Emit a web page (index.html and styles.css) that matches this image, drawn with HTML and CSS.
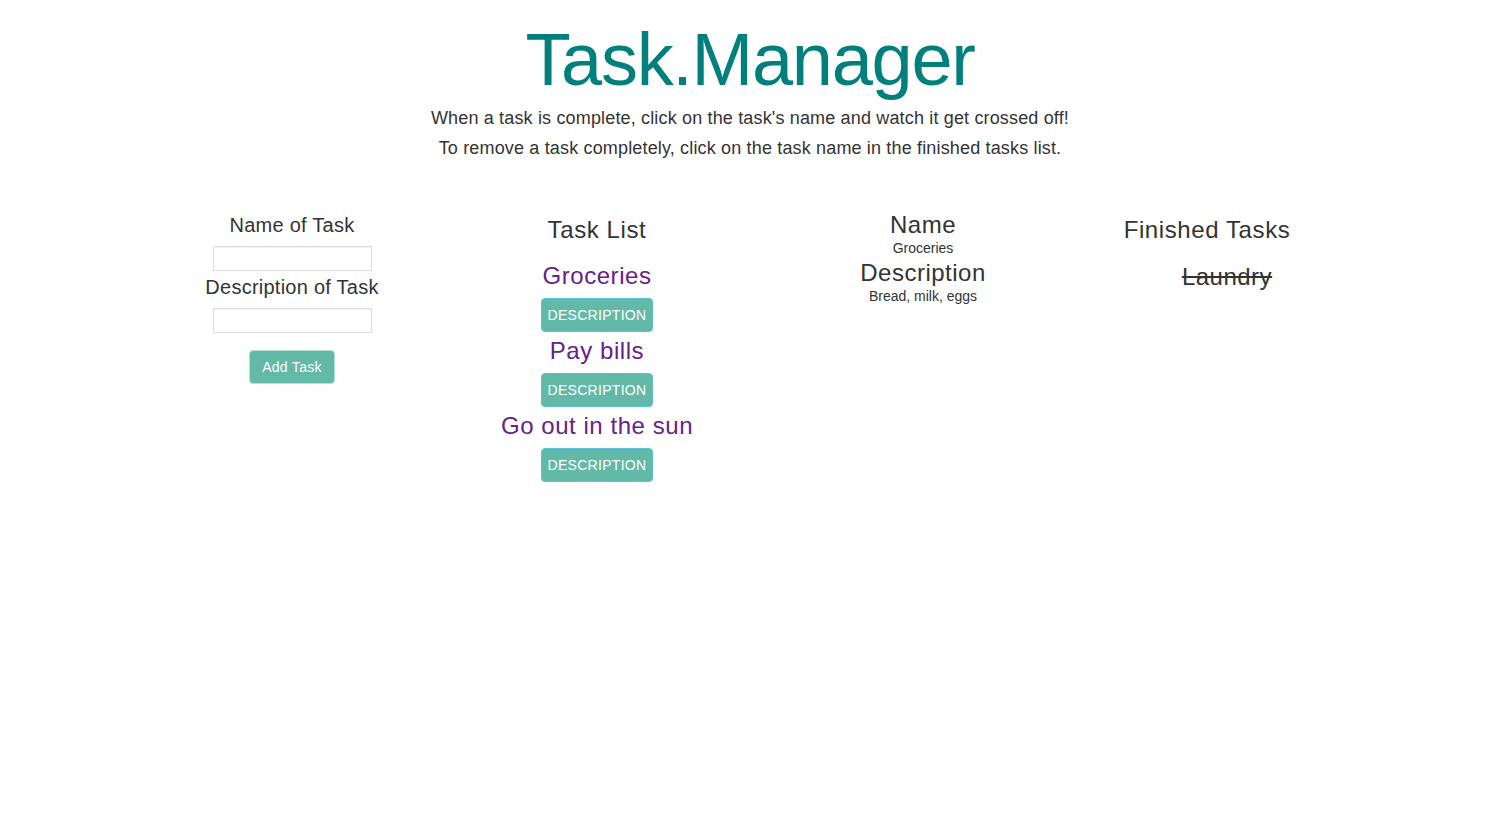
FILE: index.html
```html
<!DOCTYPE html>
<html lang="en">
<head>
<meta charset="utf-8">
<title>Task.Manager</title>
<link rel="stylesheet" href="styles.css">
</head>
<body>
<header class="header">
  <h1 class="title">Task.Manager</h1>
  <p class="intro">When a task is complete, click on the task's name and watch it get crossed off!</p>
  <p class="intro">To remove a task completely, click on the task name in the finished tasks list.</p>
</header>
<main class="board">
  <section class="col col-form">
    <label class="field-label" for="name">Name of Task</label>
    <input class="field" id="name" type="text">
    <label class="field-label second" for="desc">Description of Task</label>
    <input class="field" id="desc" type="text">
    <button class="btn btn-add" type="button">Add Task</button>
  </section>
  <section class="col col-list">
    <h3 class="col-title">Task List</h3>
    <div class="tasks">
      <div class="task">
        <div class="task-name">Groceries</div>
        <button class="btn btn-desc" type="button">DESCRIPTION</button>
      </div>
      <div class="task">
        <div class="task-name">Pay bills</div>
        <button class="btn btn-desc" type="button">DESCRIPTION</button>
      </div>
      <div class="task">
        <div class="task-name">Go out in the sun</div>
        <button class="btn btn-desc" type="button">DESCRIPTION</button>
      </div>
    </div>
  </section>
  <section class="col col-detail">
    <h3 class="detail-title">Name</h3>
    <div class="detail-text">Groceries</div>
    <h3 class="detail-title second">Description</h3>
    <div class="detail-text">Bread, milk, eggs</div>
  </section>
  <section class="col col-done">
    <h3 class="col-title">Finished Tasks</h3>
    <ul class="done-list">
      <li class="done-item">Laundry</li>
    </ul>
  </section>
</main>
</body>
</html>
```
FILE: styles.css
```css
* { box-sizing: border-box; }

body {
  margin: 0;
  font-family: "Liberation Sans", Arial, Helvetica, sans-serif;
  color: #333;
  background: #fff;
}

.header {
  text-align: center;
}

.title {
  margin: 23px 0 6px;
  font-size: 74px;
  line-height: 74px;
  font-weight: normal;
  letter-spacing: -1.3px;
  color: #00807d;
}

.intro {
  margin: 0;
  font-size: 18px;
  line-height: 30px;
  letter-spacing: 0.16px;
}

.board {
  display: grid;
  grid-template-columns: 300px 310px 342px 226px;
  margin: 49px 0 0 142px;
  align-items: start;
}

.col {
  display: flex;
  flex-direction: column;
  align-items: center;
  text-align: center;
}

.field-label {
  font-size: 20px;
  line-height: 22px;
  margin-top: 2px;
  letter-spacing: 0.25px;
}

.field-label.second {
  margin-top: 5px;
}

.field {
  width: 159px;
  height: 25px;
  margin-top: 10px;
  border: 1px solid #ddd;
  box-shadow: inset 0 1px 1px rgba(0,0,0,0.05);
  background: #fff;
}

.btn {
  font-family: "Liberation Sans", Arial, Helvetica, sans-serif;
  font-size: 14px;
  line-height: 20px;
  letter-spacing: 0.3px;
  color: #fff;
  background: #63b9a8;
  border: 1px solid #b9ddd6;
  border-radius: 4px;
  padding: 6px 12px;
}

.btn-add {
  margin-top: 17px;
  width: 86px;
  padding: 6px 0;
}

.col-title {
  margin: 5px 0 0;
  font-size: 24px;
  line-height: 26px;
  font-weight: normal;
  letter-spacing: 0.6px;
}

.tasks {
  margin-top: 20px;
  display: flex;
  flex-direction: column;
  align-items: center;
}

.task {
  display: flex;
  flex-direction: column;
  align-items: center;
  margin-bottom: 6px;
}

.task-name {
  font-size: 24px;
  line-height: 26px;
  letter-spacing: 0.55px;
  color: #68208a;
  margin-bottom: 9px;
}

.btn-desc {
  width: 112px;
  padding: 6px 0;
  border-color: #5bc0de;
}

.detail-title {
  margin: 0;
  font-size: 24px;
  line-height: 26px;
  font-weight: normal;
  letter-spacing: 0.5px;
}

.detail-title.second {
  margin-top: 2px;
}

.detail-text {
  font-size: 14px;
  line-height: 20px;
}

.done-list {
  list-style: none;
  margin: 21px 0 0;
  padding: 0 0 0 40px;
}

.done-item {
  font-size: 24px;
  line-height: 26px;
  letter-spacing: 0.5px;
  text-decoration: line-through;
}
```
